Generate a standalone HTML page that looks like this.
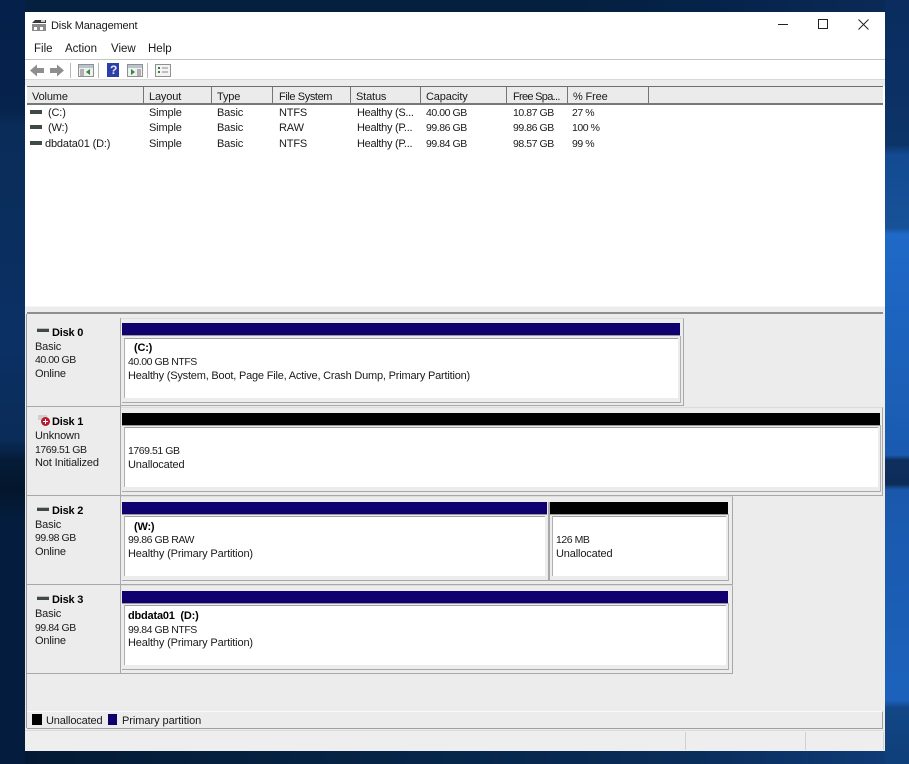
<!DOCTYPE html>
<html><head><meta charset="utf-8"><title>Disk Management</title>
<style>
html,body{margin:0;padding:0;width:909px;height:764px;overflow:hidden;background:#06224a}
body{position:relative;font-family:"Liberation Sans",sans-serif;font-size:11px;letter-spacing:-.15px;color:#1a1a1a}
div,svg,span.t{position:absolute}
.t{white-space:nowrap;line-height:14px;height:14px;margin-top:1px}
.b{font-weight:bold;color:#000;letter-spacing:-.2px}
.n{font-size:10.5px;letter-spacing:-.45px}
.m{font-size:11.5px;letter-spacing:0}
.sep{width:1px;background:#757575;top:87px;height:16px}
.bar{height:12px}
.navy{background:#10006f}
.blk{background:#000}
.cell{background:#ececec;border-right:1px solid #a8a8a8;border-bottom:1px solid #a8a8a8;border-top:1px solid #dcdcdc;box-sizing:border-box}
.body{background:#fff;border-top:1px solid #a0a0a0;box-sizing:border-box}
.hl{height:1px;background:#a8a8a8}
.vl{width:1px;background:#b0b0b0}
</style></head>
<body>
<!-- wallpaper -->
<div style="left:0;top:0;width:25px;height:764px;background:linear-gradient(180deg,#05204a 0,#06234c 110px,#0a2c58 125px,#0b3064 340px,#0a2c58 440px,#051c38 460px,#04162c 488px,#041c3e 520px,#041c3e 764px)"></div>
<div style="left:885px;top:0;width:24px;height:764px;background:linear-gradient(180deg,#0a2c5e 0,#0c3468 145px,#134a92 155px,#175299 228px,#1f69c8 234px,#1b5fb6 400px,#1a5ab0 455px,#0e2f5e 460px,#0d2c58 484px,#1a58ac 490px,#1c62bc 700px,#124686 708px,#0f3f7a 764px)"></div>
<div style="left:25px;top:0;width:860px;height:12px;background:linear-gradient(90deg,#04203e,#04203e 60%,#05224a 80%,#0a2a56)"></div>
<div style="left:25px;top:751px;width:860px;height:13px;background:linear-gradient(90deg,#041a34,#06264a 50%,#0a2c58 75%,#0e3a76)"></div>

<!-- window -->
<div style="left:25px;top:12px;width:860px;height:739px;background:#fff"></div>
<svg style="left:31px;top:18px" width="16" height="14" viewBox="0 0 16 14"><path d="M4 2h11v3H1z" fill="#3a3a3a"/><rect x="1" y="6" width="14" height="7" fill="#8a8a8a"/><rect x="3" y="9" width="3" height="3" fill="#fff"/><rect x="9" y="9" width="3" height="3" fill="#fff"/><rect x="10" y="2" width="4" height="2" fill="#ccc"/></svg>
<span class="t" style="left:51px;top:18px">Disk Management</span>
<div style="left:778px;top:24px;width:10px;height:1px;background:#222"></div>
<div style="left:818px;top:19px;width:8px;height:8px;border:1px solid #222"></div>
<svg style="left:858px;top:19px" width="11" height="11" viewBox="0 0 11 11"><path d="M.5.5l10 10M10.5.5l-10 10" stroke="#222" stroke-width="1" fill="none"/></svg>

<span class="t m" style="left:34px;top:41px">File</span>
<span class="t m" style="left:65px;top:41px">Action</span>
<span class="t m" style="left:111px;top:41px">View</span>
<span class="t m" style="left:148px;top:41px">Help</span>
<div style="left:25px;top:59px;width:860px;height:1px;background:#c4c4c4"></div>

<!-- toolbar -->
<svg style="left:29px;top:63px" width="36" height="15" viewBox="0 0 36 15"><path d="M1 7.500L8 1.500V5h7v5H8v3.500z" fill="#8e8e8e"/><path d="M35 7.500L28 1.500V5h-7v5h7v3.500z" fill="#8e8e8e"/></svg>
<div style="left:70px;top:63px;width:1px;height:15px;background:#b8b8b8"></div>
<svg style="left:78px;top:64px" width="16" height="14" viewBox="0 0 16 14"><rect x=".5" y=".5" width="15" height="12" fill="#f0f0f0" stroke="#909090"/><rect x="1" y="1" width="14" height="3" fill="#b8c4d0"/><rect x="2" y="5" width="4" height="7" fill="#b0b0b0"/><path d="M12 5v6L8 8z" fill="#2f8a3c"/></svg>
<div style="left:98px;top:63px;width:1px;height:15px;background:#b8b8b8"></div>
<div style="left:107px;top:63px;width:12px;height:14px;background:#2b3fa8"></div>
<span class="t b" style="left:110px;top:62px;color:#e8e8ff;font-size:12px">?</span>
<svg style="left:127px;top:64px" width="16" height="14" viewBox="0 0 16 14"><rect x=".5" y=".5" width="15" height="12" fill="#f0f0f0" stroke="#909090"/><rect x="1" y="1" width="14" height="3" fill="#b8c4d0"/><rect x="10" y="5" width="4" height="7" fill="#b0b0b0"/><path d="M4 5v6l4-3z" fill="#2f8a3c"/></svg>
<div style="left:147px;top:63px;width:1px;height:15px;background:#b8b8b8"></div>
<svg style="left:155px;top:64px" width="16" height="13" viewBox="0 0 16 13"><rect x=".5" y=".5" width="15" height="12" fill="#f4f4f4" stroke="#909090"/><path d="M3 3h2v2H3zM3 7h2v2H3z" fill="#3a7a3c"/><path d="M7 4h6M7 8h6" stroke="#8a8a8a"/></svg>

<div style="left:25px;top:79px;width:860px;height:1px;background:#d8d8d8"></div>
<div style="left:25px;top:80px;width:860px;height:6px;background:#ececec"></div>

<!-- list -->
<div style="left:27px;top:86px;width:856px;height:19px;background:#ebebeb;border-top:1px solid #6e6e6e;border-bottom:2px solid #777;box-sizing:border-box"></div>
<div class="sep" style="left:143px"></div><div class="sep" style="left:211px"></div><div class="sep" style="left:272px"></div><div class="sep" style="left:350px"></div><div class="sep" style="left:420px"></div><div class="sep" style="left:506px"></div><div class="sep" style="left:567px"></div><div class="sep" style="left:648px"></div>
<span class="t" style="left:32px;top:89px">Volume</span>
<span class="t" style="left:149px;top:89px">Layout</span>
<span class="t" style="left:217px;top:89px">Type</span>
<span class="t" style="left:279px;top:89px;letter-spacing:-.4px">File System</span>
<span class="t" style="left:356px;top:89px">Status</span>
<span class="t" style="left:426px;top:89px">Capacity</span>
<span class="t" style="left:513px;top:89px;letter-spacing:-.7px">Free Spa...</span>
<span class="t" style="left:573px;top:89px">% Free</span>

<div style="left:30px;top:110px;width:12px;height:4px;background:#3f4a42"></div>
<span class="t" style="left:48px;top:105px">(C:)</span><span class="t" style="left:149px;top:105px">Simple</span><span class="t" style="left:217px;top:105px">Basic</span><span class="t" style="left:279px;top:105px">NTFS</span><span class="t" style="left:357px;top:105px;letter-spacing:-.3px">Healthy (S...</span><span class="t n" style="left:426px;top:105px">40.00 GB</span><span class="t n" style="left:513px;top:105px">10.87 GB</span><span class="t n" style="left:572px;top:105px">27 %</span>
<div style="left:30px;top:125px;width:12px;height:4px;background:#3f4a42"></div>
<span class="t" style="left:48px;top:120px">(W:)</span><span class="t" style="left:149px;top:120px">Simple</span><span class="t" style="left:217px;top:120px">Basic</span><span class="t" style="left:279px;top:120px">RAW</span><span class="t" style="left:357px;top:120px;letter-spacing:-.3px">Healthy (P...</span><span class="t n" style="left:426px;top:120px">99.86 GB</span><span class="t n" style="left:513px;top:120px">99.86 GB</span><span class="t n" style="left:572px;top:120px">100 %</span>
<div style="left:30px;top:141px;width:12px;height:4px;background:#3f4a42"></div>
<span class="t" style="left:45px;top:136px">dbdata01 (D:)</span><span class="t" style="left:149px;top:136px">Simple</span><span class="t" style="left:217px;top:136px">Basic</span><span class="t" style="left:279px;top:136px">NTFS</span><span class="t" style="left:357px;top:136px;letter-spacing:-.3px">Healthy (P...</span><span class="t n" style="left:426px;top:136px">99.84 GB</span><span class="t n" style="left:513px;top:136px">98.57 GB</span><span class="t n" style="left:572px;top:136px">99 %</span>

<!-- lower pane -->
<div style="left:25px;top:306px;width:860px;height:425px;background:#ececec"></div>
<div style="left:25px;top:731px;width:860px;height:20px;background:#eeeeee"></div>
<div style="left:25px;top:306px;width:860px;height:1px;background:#f6f6f6"></div>
<div style="left:27px;top:312px;width:856px;height:2px;background:#8e8e8e"></div>
<div style="left:26px;top:314px;width:1px;height:414px;background:#9a9a9a"></div>

<!-- disk labels -->
<div style="left:120px;top:318px;width:1px;height:356px;background:#a8a8a8"></div>
<div style="left:27px;top:406px;width:94px;height:1px;background:#a8a8a8"></div>
<div style="left:27px;top:495px;width:94px;height:1px;background:#a8a8a8"></div>
<div style="left:27px;top:584px;width:94px;height:1px;background:#a8a8a8"></div>
<div style="left:27px;top:673px;width:94px;height:1px;background:#a8a8a8"></div>

<div style="left:37px;top:328px;width:12px;height:3px;background:#3f4a42;border-top:1px solid #bbb"></div>
<span class="t b" style="left:52px;top:325px">Disk 0</span>
<span class="t" style="left:35px;top:339px">Basic</span><span class="t n" style="left:35px;top:352px">40.00 GB</span><span class="t" style="left:35px;top:366px">Online</span>

<div style="left:38px;top:415px;width:9px;height:5px;background:#d0d0d0"></div>
<div style="left:41px;top:417px;width:9px;height:9px;background:#b81c2c;border-radius:50%"></div>
<div style="left:43px;top:421px;width:5px;height:1px;background:#fff"></div>
<div style="left:45px;top:419px;width:1px;height:5px;background:#fff"></div>
<span class="t b" style="left:52px;top:414px">Disk 1</span>
<span class="t" style="left:35px;top:428px">Unknown</span><span class="t n" style="left:35px;top:442px">1769.51 GB</span><span class="t" style="left:35px;top:455px">Not Initialized</span>

<div style="left:37px;top:507px;width:12px;height:3px;background:#3f4a42;border-top:1px solid #bbb"></div>
<span class="t b" style="left:52px;top:503px">Disk 2</span>
<span class="t" style="left:35px;top:517px">Basic</span><span class="t n" style="left:35px;top:530px">99.98 GB</span><span class="t" style="left:35px;top:544px">Online</span>

<div style="left:37px;top:596px;width:12px;height:3px;background:#3f4a42;border-top:1px solid #bbb"></div>
<span class="t b" style="left:52px;top:592px">Disk 3</span>
<span class="t" style="left:35px;top:606px">Basic</span><span class="t n" style="left:35px;top:620px">99.84 GB</span><span class="t" style="left:35px;top:633px">Online</span>

<!-- disk 0 -->
<div class="cell" style="left:121px;top:318px;width:563px;height:88px"></div>
<div class="bar navy" style="left:122px;top:323px;width:558px"></div>
<div class="hl" style="left:122px;top:335px;width:558px;background:#9a9a9a"></div>
<div class="body" style="left:124px;top:338px;width:554px;height:60px"></div>
<div class="vl" style="left:124px;top:338px;height:60px"></div>
<div class="hl" style="left:122px;top:402px;width:559px"></div>
<div class="vl" style="left:680px;top:336px;height:67px"></div>
<span class="t b" style="left:134px;top:340px">(C:)</span>
<span class="t n" style="left:128px;top:354px">40.00 GB NTFS</span>
<span class="t" style="left:128px;top:368px;letter-spacing:-.2px">Healthy (System, Boot, Page File, Active, Crash Dump, Primary Partition)</span>

<!-- disk 1 -->
<div class="cell" style="left:121px;top:407px;width:762px;height:89px"></div>
<div class="bar blk" style="left:122px;top:413px;width:758px"></div>
<div class="hl" style="left:122px;top:425px;width:758px;background:#9a9a9a"></div>
<div class="body" style="left:124px;top:427px;width:754px;height:60px"></div>
<div class="vl" style="left:124px;top:427px;height:60px"></div>
<div class="hl" style="left:122px;top:491px;width:759px"></div>
<div class="vl" style="left:880px;top:425px;height:67px"></div>
<span class="t n" style="left:128px;top:443px">1769.51 GB</span>
<span class="t" style="left:128px;top:457px">Unallocated</span>

<!-- disk 2 -->
<div class="cell" style="left:121px;top:496px;width:612px;height:89px"></div>
<div class="bar navy" style="left:122px;top:502px;width:425px"></div>
<div class="hl" style="left:122px;top:514px;width:425px;background:#9a9a9a"></div>
<div class="body" style="left:124px;top:516px;width:421px;height:60px"></div>
<div class="vl" style="left:124px;top:516px;height:60px"></div>
<div class="vl" style="left:548px;top:502px;height:78px;width:2px;background:#a8a8a8"></div>
<div class="bar blk" style="left:550px;top:502px;width:178px"></div>
<div class="hl" style="left:550px;top:514px;width:178px;background:#9a9a9a"></div>
<div class="body" style="left:552px;top:516px;width:174px;height:60px"></div>
<div class="vl" style="left:552px;top:516px;height:60px"></div>
<div class="hl" style="left:122px;top:580px;width:607px"></div>
<div class="vl" style="left:728px;top:514px;height:67px"></div>
<span class="t b" style="left:134px;top:519px">(W:)</span>
<span class="t n" style="left:128px;top:532px">99.86 GB RAW</span>
<span class="t" style="left:128px;top:546px">Healthy (Primary Partition)</span>
<span class="t n" style="left:556px;top:532px">126 MB</span>
<span class="t" style="left:556px;top:546px">Unallocated</span>

<!-- disk 3 -->
<div class="cell" style="left:121px;top:585px;width:612px;height:89px"></div>
<div class="bar navy" style="left:122px;top:591px;width:606px"></div>
<div class="hl" style="left:122px;top:603px;width:606px;background:#9a9a9a"></div>
<div class="body" style="left:124px;top:605px;width:602px;height:60px"></div>
<div class="vl" style="left:124px;top:605px;height:60px"></div>
<div class="hl" style="left:122px;top:669px;width:607px"></div>
<div class="vl" style="left:728px;top:603px;height:67px"></div>
<span class="t b" style="left:128px;top:608px">dbdata01&nbsp; (D:)</span>
<span class="t n" style="left:128px;top:622px">99.84 GB NTFS</span>
<span class="t" style="left:128px;top:635px">Healthy (Primary Partition)</span>

<!-- legend -->
<div style="left:27px;top:711px;width:856px;height:18px;background:#ececec;border-top:1px solid #fafafa;border-bottom:1px solid #a0a0a0;border-right:1px solid #a0a0a0;box-sizing:border-box"></div>
<div style="left:32px;top:714px;width:10px;height:11px;background:#000"></div>
<span class="t" style="left:46px;top:713px">Unallocated</span>
<div style="left:108px;top:714px;width:9px;height:11px;background:#10006f"></div>
<span class="t" style="left:122px;top:713px;letter-spacing:-.05px">Primary partition</span>

<!-- status -->
<div style="left:25px;top:730px;width:860px;height:1px;background:#dcdcdc"></div>
<div style="left:685px;top:732px;width:1px;height:18px;background:#d0d0d0"></div>
<div style="left:805px;top:732px;width:1px;height:18px;background:#d0d0d0"></div>
<div style="left:883px;top:732px;width:1px;height:18px;background:#d0d0d0"></div>
</body></html>
